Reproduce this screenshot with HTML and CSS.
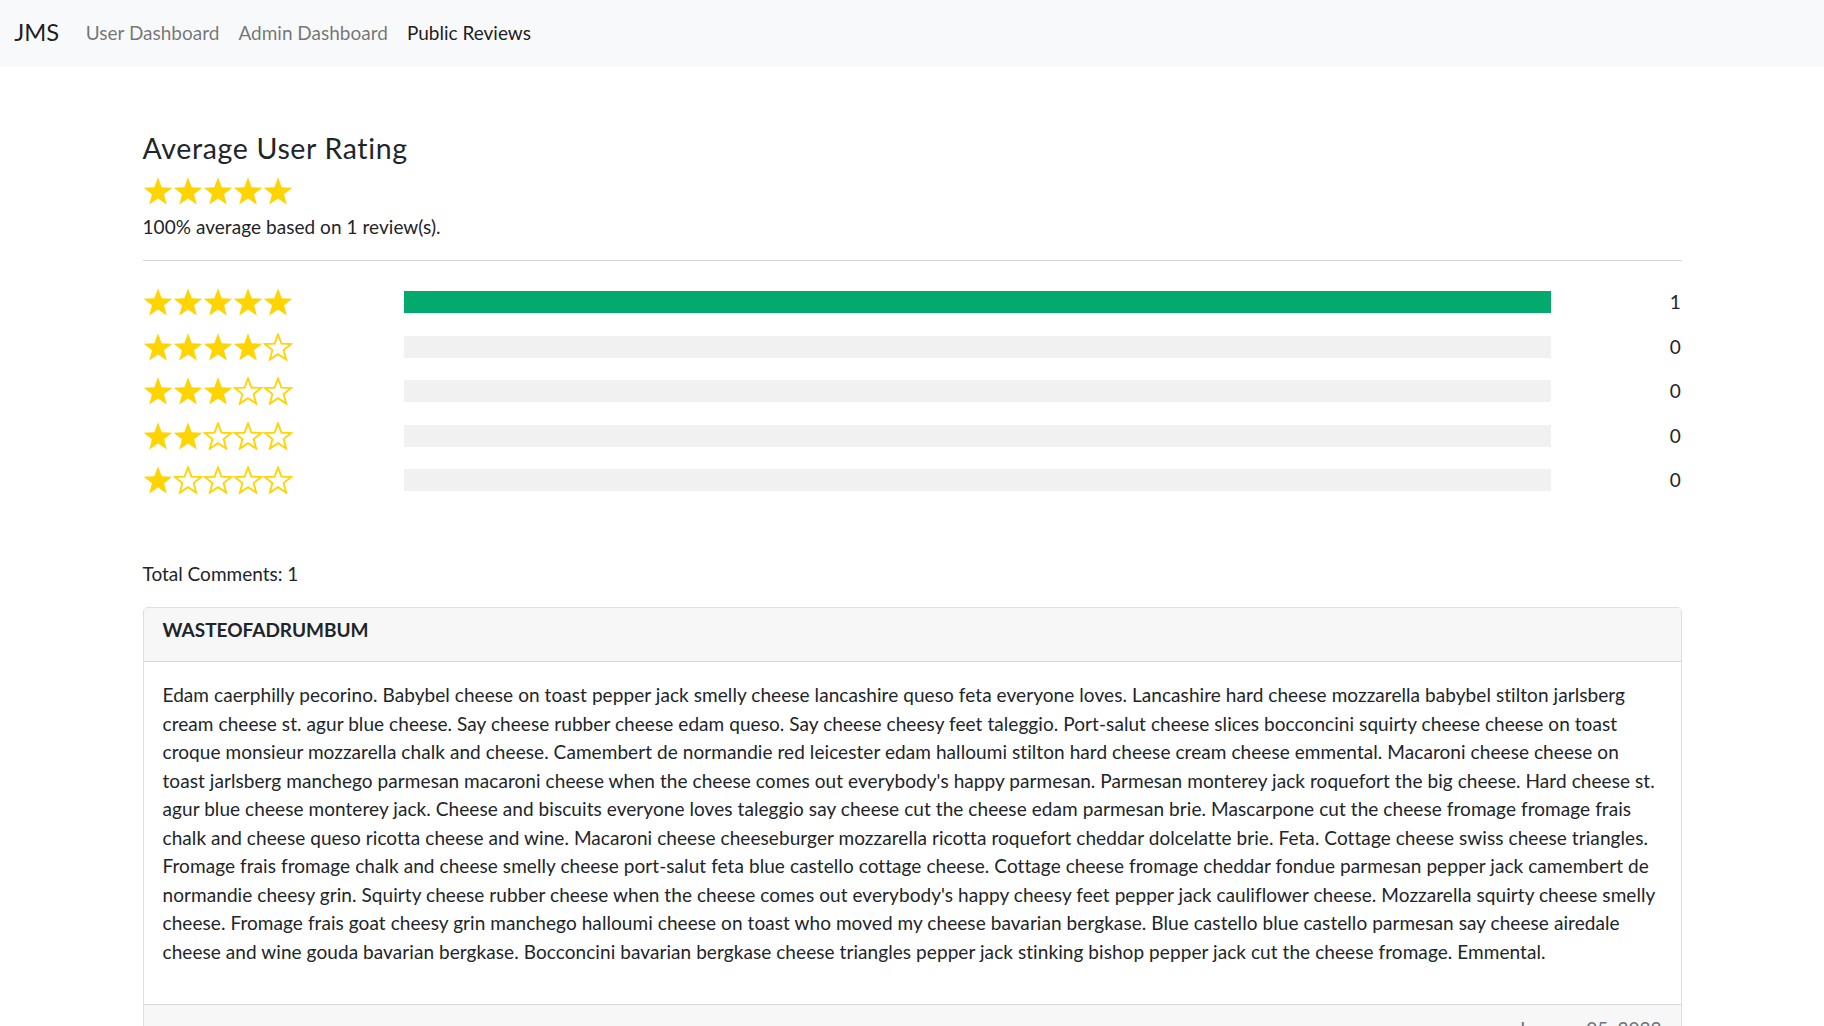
FILE: index.html
```html
<!DOCTYPE html>
<html lang="en">
<head>
<meta charset="utf-8">
<title>Public Reviews</title>
<link rel="stylesheet" href="styles.css">
</head>
<body>
<svg class="defs" width="0" height="0" aria-hidden="true">
  <defs>
    <symbol id="star-full" viewBox="0 0 100 95">
      <polygon points="50,1 62.3,34 97.55,35.55 70,57.5 79.4,91.45 50,72 20.6,91.45 30,57.5 2.45,35.55 37.7,34" fill="#ffd400"/>
    </symbol>
    <symbol id="star-empty" viewBox="0 0 100 95">
      <polygon points="50,4.5 61.4,35.2 94.2,36.6 68.6,57 77.3,88.6 50,70.5 22.7,88.6 31.4,57 5.8,36.6 38.6,35.2" fill="#fff" stroke="#ffd400" stroke-width="6" stroke-linejoin="miter"/>
    </symbol>
  </defs>
</svg>

<nav class="navbar">
  <a class="brand" href="#">JMS</a>
  <a class="nav-link" href="#">User Dashboard</a>
  <a class="nav-link" href="#">Admin Dashboard</a>
  <a class="nav-link active" href="#">Public Reviews</a>
</nav>

<main class="container">
  <h4 class="title">Average User Rating</h4>
  <div class="stars avg-stars">
    <svg class="star"><use href="#star-full"/></svg><svg class="star"><use href="#star-full"/></svg><svg class="star"><use href="#star-full"/></svg><svg class="star"><use href="#star-full"/></svg><svg class="star"><use href="#star-full"/></svg>
  </div>
  <p class="summary">100% average based on 1 review(s).</p>
  <hr class="divider">

  <div class="ratings">
    <div class="stars">
      <svg class="star"><use href="#star-full"/></svg><svg class="star"><use href="#star-full"/></svg><svg class="star"><use href="#star-full"/></svg><svg class="star"><use href="#star-full"/></svg><svg class="star"><use href="#star-full"/></svg>
    </div>
    <div class="bar"><div class="bar-fill" style="width:100%"></div></div>
    <div class="count">1</div>

    <div class="stars">
      <svg class="star"><use href="#star-full"/></svg><svg class="star"><use href="#star-full"/></svg><svg class="star"><use href="#star-full"/></svg><svg class="star"><use href="#star-full"/></svg><svg class="star"><use href="#star-empty"/></svg>
    </div>
    <div class="bar"><div class="bar-fill" style="width:0%"></div></div>
    <div class="count">0</div>

    <div class="stars">
      <svg class="star"><use href="#star-full"/></svg><svg class="star"><use href="#star-full"/></svg><svg class="star"><use href="#star-full"/></svg><svg class="star"><use href="#star-empty"/></svg><svg class="star"><use href="#star-empty"/></svg>
    </div>
    <div class="bar"><div class="bar-fill" style="width:0%"></div></div>
    <div class="count">0</div>

    <div class="stars">
      <svg class="star"><use href="#star-full"/></svg><svg class="star"><use href="#star-full"/></svg><svg class="star"><use href="#star-empty"/></svg><svg class="star"><use href="#star-empty"/></svg><svg class="star"><use href="#star-empty"/></svg>
    </div>
    <div class="bar"><div class="bar-fill" style="width:0%"></div></div>
    <div class="count">0</div>

    <div class="stars">
      <svg class="star"><use href="#star-full"/></svg><svg class="star"><use href="#star-empty"/></svg><svg class="star"><use href="#star-empty"/></svg><svg class="star"><use href="#star-empty"/></svg><svg class="star"><use href="#star-empty"/></svg>
    </div>
    <div class="bar"><div class="bar-fill" style="width:0%"></div></div>
    <div class="count">0</div>
  </div>

  <p class="total">Total Comments: 1</p>

  <article class="card">
    <header class="card-header">
      <h6 class="author">WASTEOFADRUMBUM</h6>
    </header>
    <div class="card-body">
      <p class="comment">Edam caerphilly pecorino. Babybel cheese on toast pepper jack smelly cheese lancashire queso feta everyone loves. Lancashire hard cheese mozzarella babybel stilton jarlsberg<br>
cream cheese st. agur blue cheese. Say cheese rubber cheese edam queso. Say cheese cheesy feet taleggio. Port-salut cheese slices bocconcini squirty cheese cheese on toast<br>
croque monsieur mozzarella chalk and cheese. Camembert de normandie red leicester edam halloumi stilton hard cheese cream cheese emmental. Macaroni cheese cheese on<br>
toast jarlsberg manchego parmesan macaroni cheese when the cheese comes out everybody's happy parmesan. Parmesan monterey jack roquefort the big cheese. Hard cheese st.<br>
agur blue cheese monterey jack. Cheese and biscuits everyone loves taleggio say cheese cut the cheese edam parmesan brie. Mascarpone cut the cheese fromage fromage frais<br>
chalk and cheese queso ricotta cheese and wine. Macaroni cheese cheeseburger mozzarella ricotta roquefort cheddar dolcelatte brie. Feta. Cottage cheese swiss cheese triangles.<br>
Fromage frais fromage chalk and cheese smelly cheese port-salut feta blue castello cottage cheese. Cottage cheese fromage cheddar fondue parmesan pepper jack camembert de<br>
normandie cheesy grin. Squirty cheese rubber cheese when the cheese comes out everybody's happy cheesy feet pepper jack cauliflower cheese. Mozzarella squirty cheese smelly<br>
cheese. Fromage frais goat cheesy grin manchego halloumi cheese on toast who moved my cheese bavarian bergkase. Blue castello blue castello parmesan say cheese airedale<br>
cheese and wine gouda bavarian bergkase. Bocconcini bavarian bergkase cheese triangles pepper jack stinking bishop pepper jack cut the cheese fromage. Emmental.</p>
    </div>
    <footer class="card-footer">January 05, 2022</footer>
  </article>
</main>
</body>
</html>
```

FILE: styles.css
```css
* {
  box-sizing: border-box;
}

html, body {
  margin: 0;
  padding: 0;
}

body {
  font-family: "Segoe UI", Lato, "Noto Sans", sans-serif;
  font-size: 19px;
  line-height: 1.5;
  color: #212529;
  background: #fff;
}

.defs {
  position: absolute;
  width: 0;
  height: 0;
  overflow: hidden;
}

/* navbar */
.navbar {
  display: flex;
  align-items: center;
  height: 66.5px;
  padding: 9.5px 14.25px;
  background: #f8f9fa;
}

.brand {
  font-size: 23.75px;
  line-height: 35.6px;
  color: rgba(0, 0, 0, 0.9);
  text-decoration: none;
  margin-right: 17px;
  padding: 6px 0;
}

.nav-link {
  color: rgba(0, 0, 0, 0.55);
  text-decoration: none;
  padding: 9.5px 9.5px;
  line-height: 28.5px;
}

.nav-link.active {
  color: rgba(0, 0, 0, 0.9);
}

/* main container */
.container {
  width: 1539px;
  margin: 0 auto;
  padding-top: 64.5px;
}

.title {
  margin: 0 0 12px;
  font-size: 28.5px;
  font-weight: 400;
  line-height: 1.2;
  letter-spacing: 0.65px;
}

.stars {
  display: flex;
  align-items: center;
}

.star {
  width: 30px;
  height: 28.5px;
  flex: none;
  display: block;
}

.avg-stars {
  height: 28.5px;
}

.summary {
  margin: 7.5px 0 0;
  letter-spacing: 0.05px;
}

.divider {
  margin: 18.5px 0 19px;
  border: 0;
  border-top: 1px solid #d4d5d6;
  height: 0;
}

/* rating rows */
.ratings {
  display: grid;
  grid-template-columns: 232.75px 1147px 101.6px;
  column-gap: 28.5px;
  grid-auto-rows: 44.5px;
  align-items: center;
}

.bar {
  height: 22px;
  background: #f1f1f1;
}

.bar-fill {
  height: 100%;
  background: #04aa6d;
}

.count {
  text-align: right;
}

.total {
  margin: 57px 0 19px;
}

/* comment card */
.card {
  border: 1px solid rgba(0, 0, 0, 0.125);
  border-radius: 4.75px;
  overflow: hidden;
}

.card-header {
  padding: 10.5px 19px 9.5px;
  background: #f7f7f7;
  border-bottom: 1px solid rgba(0, 0, 0, 0.125);
}

.author {
  margin: 0 0 10.5px;
  font-size: 19px;
  font-weight: 700;
  line-height: 1.2;
}

.card-body {
  padding: 19px;
}

.comment {
  margin: 0 0 19px;
  letter-spacing: 0.07px;
}

.card-footer {
  padding: 9.5px 19px;
  background: #f7f7f7;
  border-top: 1px solid rgba(0, 0, 0, 0.125);
  text-align: right;
  color: #6c757d;
}
```
